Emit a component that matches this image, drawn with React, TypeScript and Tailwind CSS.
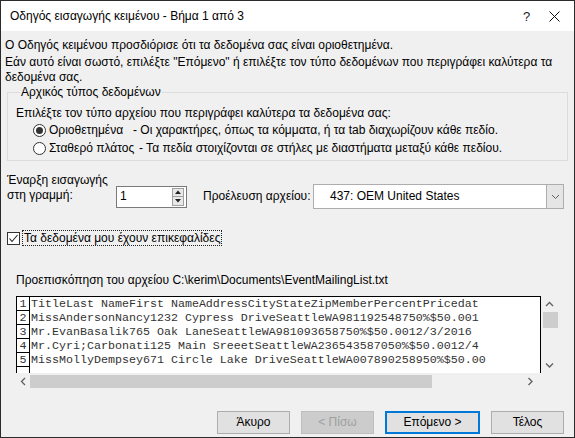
import React from 'react'

const rows = [
  'TitleLast NameFirst NameAddressCityStateZipMemberPercentPricedat',
  'MissAndersonNancy1232 Cypress DriveSeattleWA981192548750%$50.001',
  'Mr.EvanBasalik765 Oak LaneSeattleWA981093658750%$50.0012/3/2016',
  'Mr.Cyri;Carbonati125 Main SreeetSeattleWA236543587050%$50.0012/4',
  'MissMollyDempsey671 Circle Lake DriveSeattleWA007890258950%$50.00',
  '',
]

function Chevron({ dir }: { dir: 'up' | 'down' | 'left' | 'right' }) {
  const pts = {
    up: '1,5 4.5,1.5 8,5',
    down: '1,1.5 4.5,5 8,1.5',
    left: '5,1 1.5,4.5 5,8',
    right: '1.5,1 5,4.5 1.5,8',
  }[dir]
  const wide = dir === 'up' || dir === 'down'
  return (
    <svg width={wide ? 9 : 7} height={wide ? 7 : 9} viewBox={wide ? '0 0 9 7' : '0 0 7 9'}>
      <polyline points={pts} fill="none" stroke="#606060" strokeWidth="1.3" />
    </svg>
  )
}

function Radio({ checked }: { checked?: boolean }) {
  return (
    <span className="w-[13px] h-[13px] rounded-full border border-[#333] bg-white flex items-center justify-center shrink-0">
      {checked && <span className="w-[7px] h-[7px] rounded-full bg-[#333]" />}
    </span>
  )
}

export default function App() {
  return (
    <div className="w-[575px] h-[438px] border border-[#2b2b2b] bg-[#f0f0f0] flex flex-col text-[12px] text-black font-['Liberation_Sans',Arial,sans-serif] leading-[15px] overflow-hidden">
      {/* Title bar */}
      <div className="h-[30px] bg-white flex items-center pl-[9px] shrink-0">
        <span className="flex-1">Οδηγός εισαγωγής κειμένου - Βήμα 1 από 3</span>
        <span className="w-[10px] text-[13px] text-[#222] mr-[16px]">?</span>
        <svg width="11" height="11" viewBox="0 0 11 11" className="mr-[14px]">
          <path d="M0.5 0.5 L10.5 10.5 M10.5 0.5 L0.5 10.5" stroke="#111" strokeWidth="1" />
        </svg>
      </div>

      {/* Intro */}
      <p className="mt-[7px] pl-[4px]">Ο Οδηγός κειμένου προσδιόρισε ότι τα δεδομένα σας είναι οριοθετημένα.</p>
      <p className="mt-[2px] pl-[4px] pr-[10px]">
        Εάν αυτό είναι σωστό, επιλέξτε "Επόμενο" ή επιλέξτε τον τύπο δεδομένων που περιγράφει καλύτερα τα δεδομένα σας.
      </p>

      {/* Group box */}
      <fieldset className="mx-[6px] border border-[#dcdcdc] pl-[8px] pb-[3px] w-[561px]">
        <legend className="ml-[4px] px-[1px]">Αρχικός τύπος δεδομένων</legend>
        <div className="mt-[6px]">Επιλέξτε τον τύπο αρχείου που περιγράφει καλύτερα τα δεδομένα σας:</div>
        <div className="h-[18px] flex items-center pl-[17px] whitespace-nowrap">
          <Radio checked />
          <span className="ml-[3px] w-[84px]">Οριοθετημένα</span>
          <span>- Οι χαρακτήρες, όπως τα κόμματα, ή τα tab διαχωρίζουν κάθε πεδίο.</span>
        </div>
        <div className="h-[18px] flex items-center pl-[17px] whitespace-nowrap">
          <Radio />
          <span className="ml-[3px] w-[90px]">Σταθερό πλάτος</span>
          <span>- Τα πεδία στοιχίζονται σε στήλες με διαστήματα μεταξύ κάθε πεδίου.</span>
        </div>
      </fieldset>

      {/* Start row + origin */}
      <div className="mt-[12px] flex items-start pl-[6px]">
        <div className="w-[109px]">
          Έναρξη εισαγωγής
          <br />
          στη γραμμή:
        </div>
        <div className="mt-[11px] h-[25px] flex items-center">
          <div className="w-[71px] h-[22px] border border-[#7a7a7a] bg-white flex items-center">
            <span className="flex-1 pl-[3px]">1</span>
            <div className="w-[12px] h-[18px] mr-[2px] flex flex-col border border-[#a0a0a0]">
              <div className="flex-1 bg-[#e8e8e8] flex items-center justify-center border-b border-[#a0a0a0]">
                <svg width="6" height="4" viewBox="0 0 6 4"><path d="M0 4 L3 0.5 L6 4 Z" fill="#222" /></svg>
              </div>
              <div className="flex-1 bg-[#e8e8e8] flex items-center justify-center">
                <svg width="6" height="4" viewBox="0 0 6 4"><path d="M0 0 L3 3.5 L6 0 Z" fill="#222" /></svg>
              </div>
            </div>
          </div>
          <span className="ml-[16px] w-[110px]">Προέλευση αρχείου:</span>
          <div className="w-[251px] h-[25px] border border-[#adadad] bg-white flex items-center">
            <span className="flex-1 pl-[16px]">437: OEM United States</span>
            <div className="w-[17px] h-[23px] bg-[#e5e5e5] border-l border-[#adadad] flex items-center justify-center">
              <svg width="9" height="6" viewBox="0 0 9 6">
                <polyline points="1,1 4.5,4.5 8,1" fill="none" stroke="#606060" strokeWidth="1" />
              </svg>
            </div>
          </div>
        </div>
      </div>

      {/* Header checkbox */}
      <div className="mt-[21px] pl-[6px] flex items-center h-[16px]">
        <span className="w-[13px] h-[13px] border border-[#333] bg-white flex items-center justify-center">
          <svg width="11" height="11" viewBox="0 0 11 11">
            <polyline points="1.5,5.5 4,8.5 9.5,2" fill="none" stroke="#222" strokeWidth="1.1" />
          </svg>
        </span>
        <span className="ml-[2px] px-[1px] border border-dotted border-[#222] h-[16px] leading-[14px]">
          Τα δεδομένα μου έχουν επικεφαλίδες
        </span>
      </div>

      {/* Preview */}
      <p className="mt-[27px] pl-[15px]">Προεπισκόπηση του αρχείου C:\kerim\Documents\EventMailingList.txt</p>

      <div className="mt-[8px] ml-[15px] w-[542px] grid grid-cols-[525px_17px] grid-rows-[77px_17px]">
        <div className="border-l border-t border-r border-black bg-white overflow-hidden font-['Liberation_Mono','Courier_New',monospace] text-[11.67px] leading-[14px] text-[#333]">
          {rows.map((r, i) => (
            <div key={i} className="flex h-[14px]">
              <span className="w-[13px] shrink-0 border-r border-b border-black text-center">{r ? i + 1 : ''}</span>
              <span className="pl-[1px] whitespace-pre">{r}</span>
            </div>
          ))}
        </div>
        <div className="flex flex-col items-center">
          <div className="h-[16px] flex items-center justify-center"><Chevron dir="up" /></div>
          <div className="w-[15px] h-[16px] bg-[#cdcdcd] ml-[2px]" />
          <div className="flex-1" />
          <div className="h-[16px] flex items-center justify-center"><Chevron dir="down" /></div>
        </div>
        <div className="flex items-center">
          <div className="w-[14px] flex justify-center"><Chevron dir="left" /></div>
          <div className="w-[402px] h-[13px] bg-[#cdcdcd]" />
          <div className="flex-1" />
          <div className="w-[14px] flex justify-center mr-[4px]"><Chevron dir="right" /></div>
        </div>
        <div />
      </div>

      {/* Buttons */}
      <div className="mt-[21px] flex justify-end gap-[11px] pr-[10px]">
        <button className="w-[73px] h-[23px] bg-[#e1e1e1] border border-[#adadad]">Άκυρο</button>
        <button className="w-[73px] h-[23px] bg-[#cccccc] border border-[#bfbfbf] text-[#a0a0a0]">&lt; Πίσω</button>
        <button className="w-[95px] h-[23px] bg-[#e1e1e1] border-2 border-[#0078d7]">Επόμενο &gt;</button>
        <button className="w-[73px] h-[23px] bg-[#e1e1e1] border border-[#adadad]">Τέλος</button>
      </div>
    </div>
  )
}
